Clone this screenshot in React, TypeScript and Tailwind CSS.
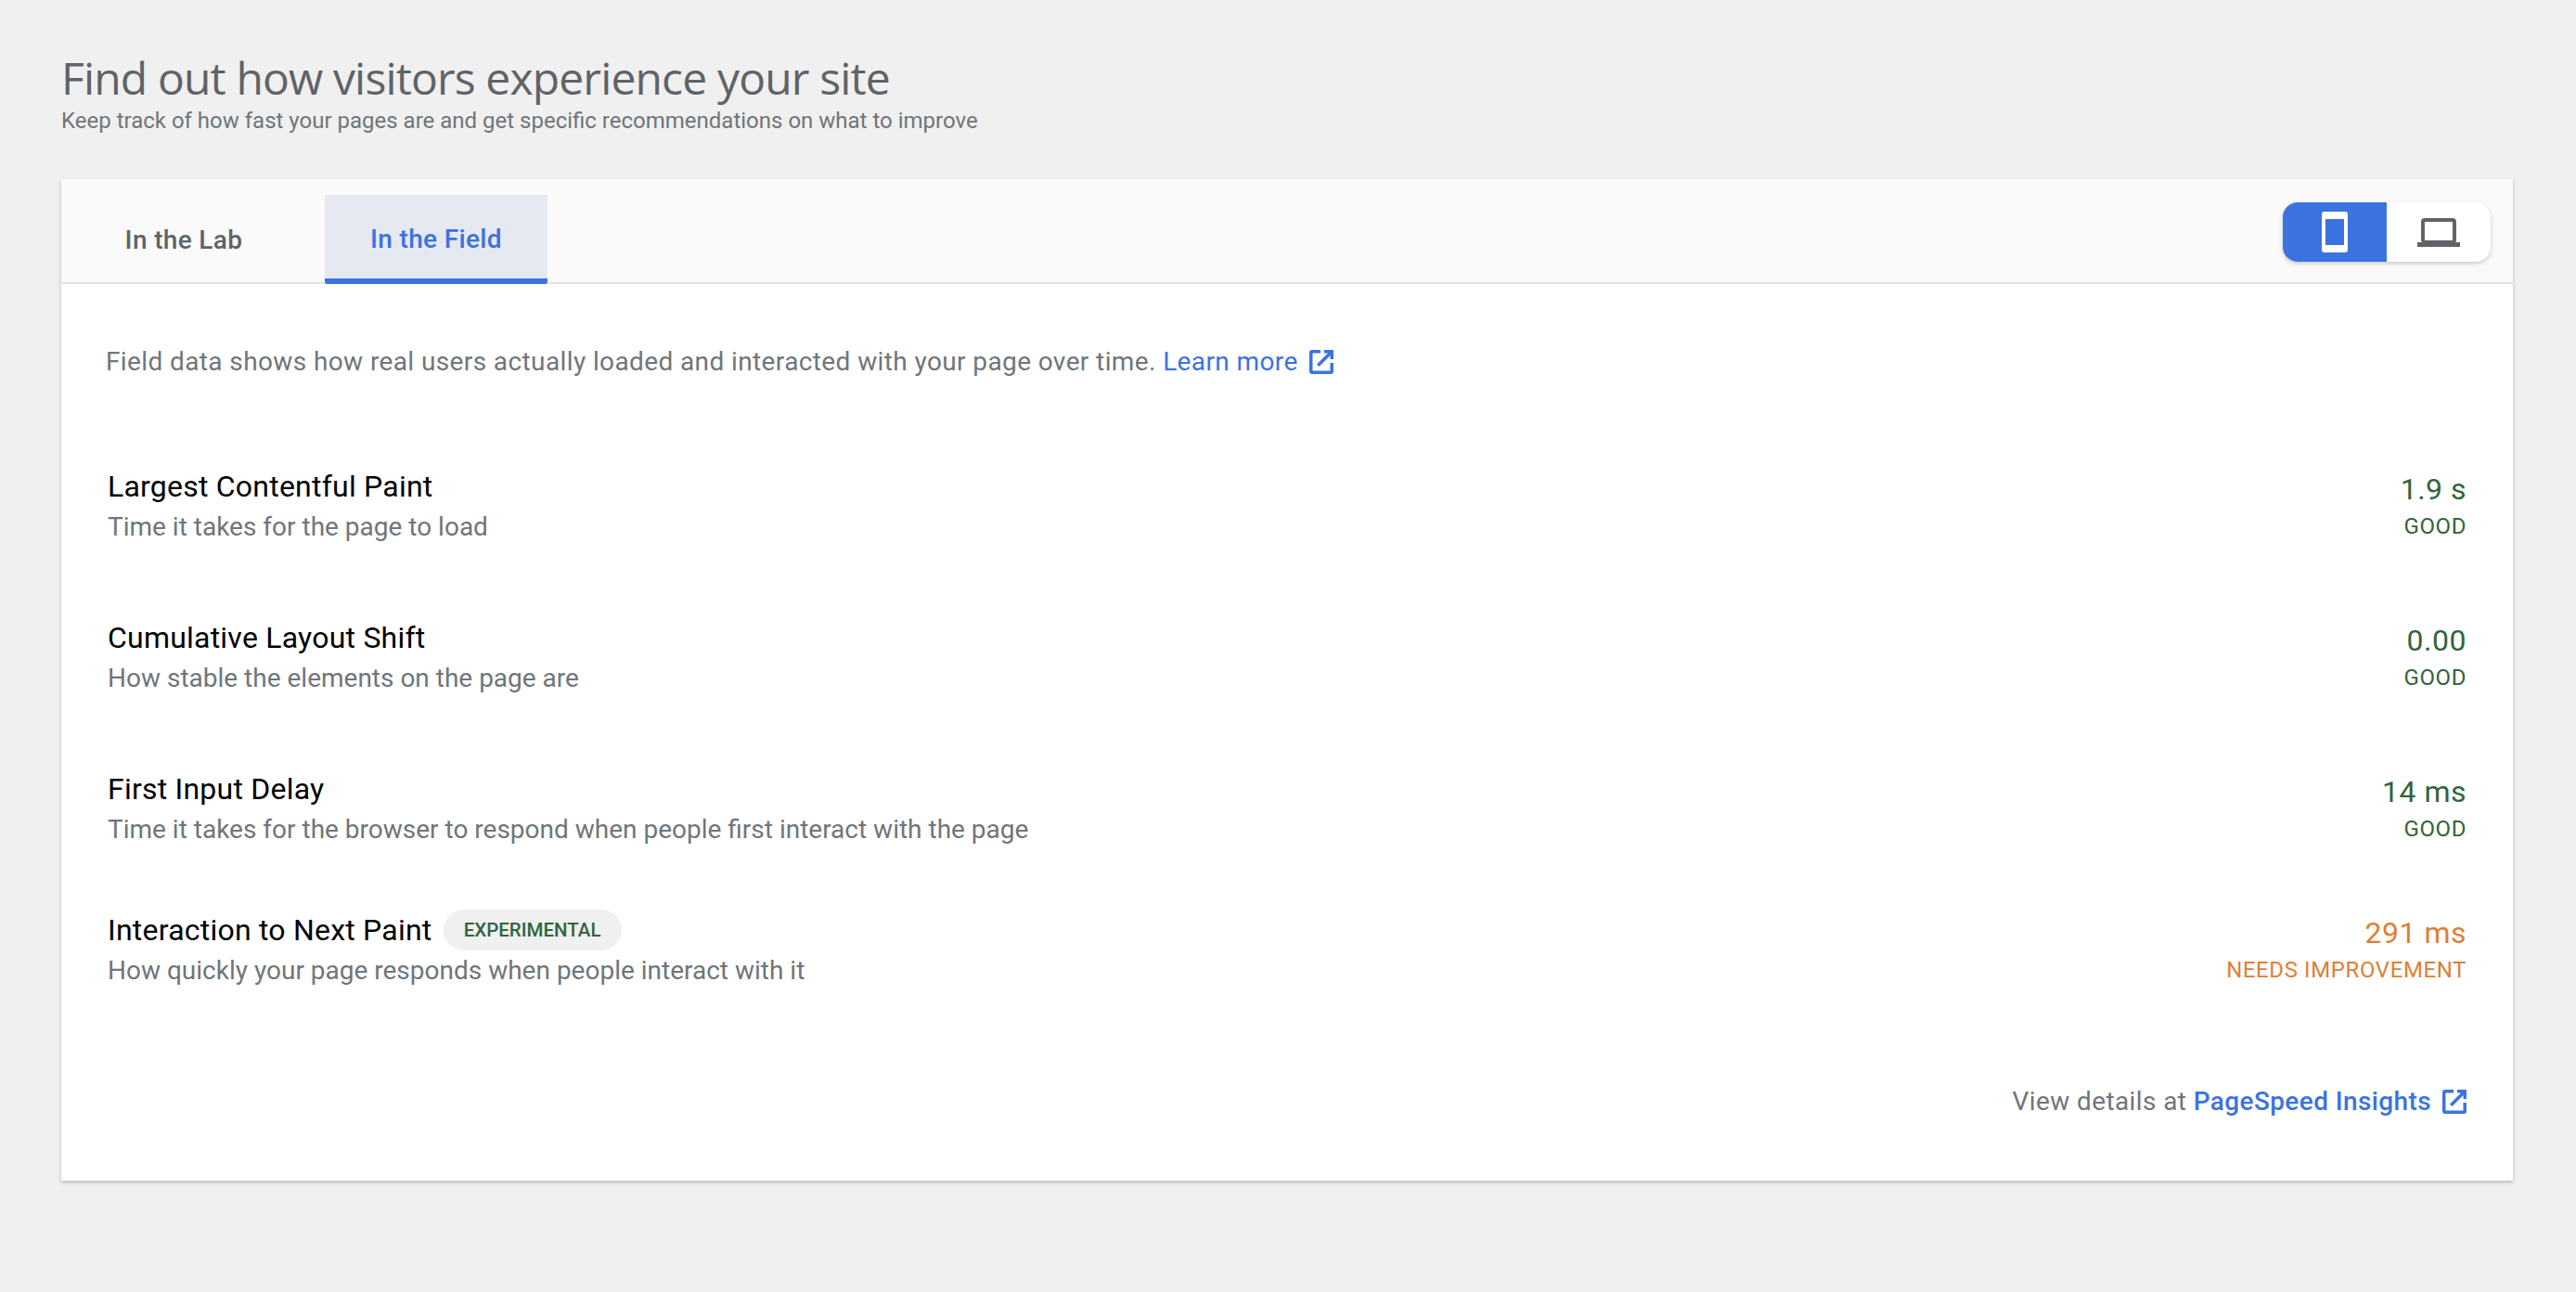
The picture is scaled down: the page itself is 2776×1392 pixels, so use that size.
import React from 'react';

const metrics = [
  { name: 'Largest Contentful Paint', desc: 'Time it takes for the page to load', value: '1.9 s', status: 'GOOD', color: 'text-[#33633c]', row: 'h-[163px]' },
  { name: 'Cumulative Layout Shift', desc: 'How stable the elements on the page are', value: '0.00', status: 'GOOD', color: 'text-[#33633c]', row: 'h-[163px]' },
  { name: 'First Input Delay', desc: 'Time it takes for the browser to respond when people first interact with the page', value: '14 ms', status: 'GOOD', color: 'text-[#33633c]', row: 'h-[152px]' },
  { name: 'Interaction to Next Paint', desc: 'How quickly your page responds when people interact with it', value: '291 ms', status: 'NEEDS IMPROVEMENT', color: 'text-[#de7f35]', row: 'h-[120px]', experimental: true },
];

// Material "open in new" icon, cropped to its square
const OpenInNew = () => (
  <svg width="26" height="26" viewBox="0 0 26 26" className="shrink-0 fill-[#3b73e0]">
    <path d="M3 0h9v3.5H3.5v19h19V14H26v9a3 3 0 0 1-3 3H3a3 3 0 0 1-3-3V3a3 3 0 0 1 3-3zM16 0h10v10h-3.5V6L10.5 18 8 15.5 20 3.5h-4V0z" />
  </svg>
);

const PhoneIcon = () => (
  <svg width="28" height="44" viewBox="0 0 28 44" className="fill-white">
    <path fillRule="evenodd" d="M3 0h22a3 3 0 0 1 3 3v38a3 3 0 0 1-3 3H3a3 3 0 0 1-3-3V3a3 3 0 0 1 3-3zm1 8v28h20V8H4z" />
  </svg>
);

const LaptopIcon = () => (
  <svg width="46" height="31" viewBox="0 0 46 31" className="fill-[#5f6368]">
    <path fillRule="evenodd" d="M8 0h30a4 4 0 0 1 4 4v20a3 3 0 0 1-1 2h5v5H0v-5h5a3 3 0 0 1-1-2V4a4 4 0 0 1 4-4zm0 4v20h30V4H8z" />
  </svg>
);

export default function App() {
  return (
    <div className="min-h-[1392px] bg-[#f0f0f0] pl-[66px] pr-[68px] pt-[59px] font-['Roboto',sans-serif]">
      <h1 className="text-[48px] leading-[50px] text-[#5f6368] font-['Open_Sans',sans-serif] tracking-[-0.85px]">
        Find out how visitors experience your site
      </h1>
      <p className="mt-[7px] text-[24px] leading-[28px] text-[#70757a]">
        Keep track of how fast your pages are and get specific recommendations on what to improve
      </p>

      <div className="mt-[49px] h-[1079px] bg-white shadow-[0_2px_4px_rgba(60,64,67,0.3)]">
        <div className="flex h-[113px] justify-between border-b-2 border-[#e2e2e2] bg-[#fafafa]">
          <div className="flex pt-[17px]">
            <div className="mr-[20px] flex h-[96px] w-[264px] items-center justify-center pt-[1px] text-[28px] font-medium tracking-[0.35px] text-[#5f6368]">
              In the Lab
            </div>
            <div className="flex h-[96px] w-[240px] items-center justify-center rounded-b-[3px] border-b-[6px] border-[#3b73e0] bg-[#e6e8f2] pt-[6px] text-[28px] font-medium tracking-[0.35px] text-[#3b73e0]">
              In the Field
            </div>
          </div>
          <div className="mr-[24px] mt-[25px] flex h-[64px] w-[224px] overflow-hidden rounded-[16px] bg-white shadow-[0_2px_4px_rgba(60,64,67,0.25)]">
            <div className="flex w-[112px] items-center justify-center bg-[#3b73e0]">
              <PhoneIcon />
            </div>
            <div className="flex w-[112px] items-center justify-center">
              <LaptopIcon />
            </div>
          </div>
        </div>

        <div className="flex items-center gap-[12px] px-[48px] pt-[64px] text-[28px] leading-[40px] tracking-[0.39px] text-[#70757a]">
          <span>
            Field data shows how real users actually loaded and interacted with your page over time.{' '}
            <span className="text-[#3b73e0]">Learn more</span>
          </span>
          <OpenInNew />
        </div>

        <div className="mt-[92px] px-[50px]">
          {metrics.map((m) => (
            <div key={m.name} className={`flex justify-between ${m.row}`}>
              <div>
                <div className="flex h-[44px] items-center gap-[12px] text-[32px] tracking-[0.22px] text-black">
                  {m.name}
                  {m.experimental && (
                    <span className="flex h-[44px] w-[192px] items-center justify-center rounded-full bg-[#f0f0f0] text-[20.5px] font-medium tracking-normal text-[#33633c]">
                      EXPERIMENTAL
                    </span>
                  )}
                </div>
                <div className="mt-[2px] text-[28px] leading-[40px] text-[#70757a]">{m.desc}</div>
              </div>
              <div className={`pt-[3px] text-right ${m.color}`}>
                <div className="text-[32px] leading-[44px] tracking-[0.5px]">{m.value}</div>
                <div className="text-[24px] leading-[36px] tracking-[0.6px]">{m.status}</div>
              </div>
            </div>
          ))}
        </div>

        <div className="mt-[67px] flex items-center justify-end gap-[12px] pl-[48px] pr-[50px] text-[28px] leading-[40px] tracking-[0.39px] text-[#70757a]">
          <span>
            View details at <span className="font-medium text-[#3b73e0]">PageSpeed Insights</span>
          </span>
          <OpenInNew />
        </div>
      </div>
    </div>
  );
}
